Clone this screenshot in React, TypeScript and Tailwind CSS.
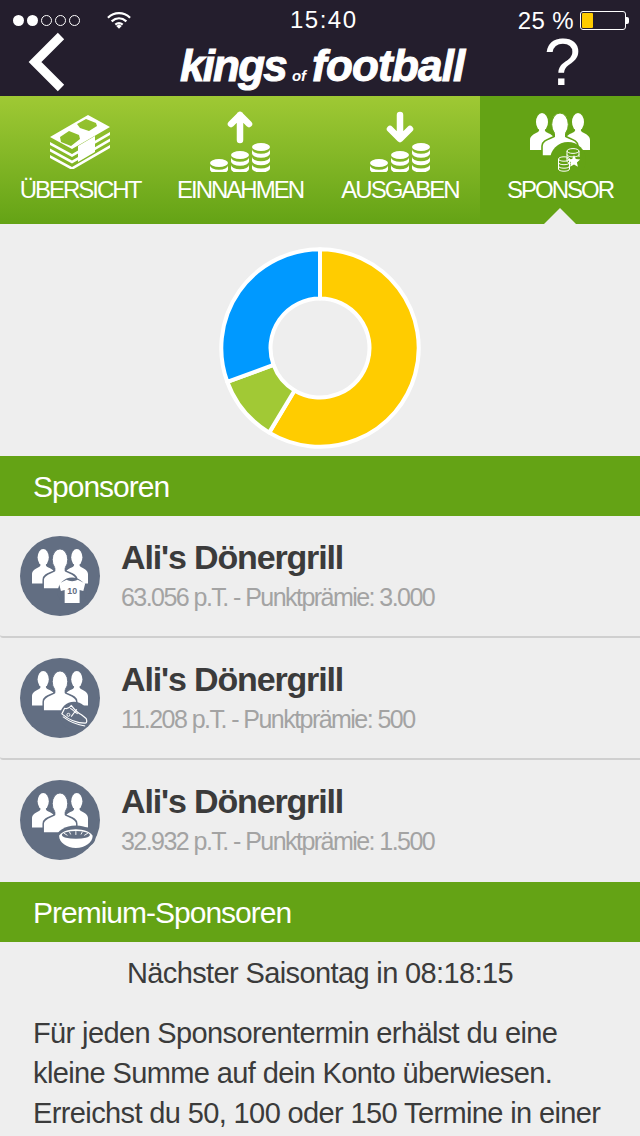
const sans = { fontFamily: '"Liberation Sans", Arial, sans-serif' };

// one coin of a stack, drawn as a crescent band
const Band = ({ cx, y }: { cx: number; y: number }) => (
  <path d={`M${cx - 9} ${y}v4a9 4.2 0 0 0 18 0v-4a9 4.2 0 0 1-18 0z`} fill="white" />
);

const Stack = ({ cx, top, count }: { cx: number; top: number; count: number }) => (
  <g>
    <ellipse cx={cx} cy={top} rx="9" ry="4" fill="white" />
    {Array.from({ length: count }).map((_, i) => (
      <Band key={i} cx={cx} y={top + 2.6 + i * 7.4} />
    ))}
  </g>
);

const Coins = () => (
  <g>
    <Stack cx={9} top={32} count={1} />
    <Stack cx={30} top={24} count={2} />
    <Stack cx={51} top={16} count={3} />
  </g>
);

const CoinsUp = () => (
  <svg width="60" height="62" viewBox="0 0 60 62" className="block">
    <path d="M30 30V5M21 14l9-9 9 9" stroke="white" strokeWidth="6.5" strokeLinecap="round" strokeLinejoin="round" fill="none" />
    <g transform="translate(0 21)"><Coins /></g>
  </svg>
);

const CoinsDown = () => (
  <svg width="60" height="62" viewBox="0 0 60 62" className="block">
    <path d="M30 5V28M20 19l10 10 10-10" stroke="white" strokeWidth="6.5" strokeLinecap="round" strokeLinejoin="round" fill="none" />
    <g transform="translate(0 21)"><Coins /></g>
  </svg>
);

const Money = () => (
  <svg width="60" height="54" viewBox="0 0 60 54" className="block mt-[5px]">
    <path
      fillRule="evenodd"
      fill="white"
      d="M0 22L38 0l22 12-38 22zM10 22l9-6 10 4 1 4-9 7-10-4zM27 9l9-5 10 4 1 3-8 5-9-3z"
    />
    {[0, 6.5, 13].map((o) => (
      <path key={o} d={`M0 ${27 + o}l22 12 38-22v3l-38 22-22-12z`} fill="white" />
    ))}
    <path d="M28 31l17-10v16l-17 10z" fill="white" />
  </svg>
);

// three people silhouette, shared by the sponsor tab and the list avatars
const People = ({ bg }: { bg: string }) => (
  <g>
    <ellipse cx="12" cy="9" rx="6" ry="9" fill="white" />
    <path d="M0 37V27c0-4 4-6 8-8 1.500-1 1.500-3 1-5h6c-.5 2-.5 4 1 5 4 2 8 3 8 8v10z" fill="white" />
    <ellipse cx="48" cy="9" rx="6" ry="9" fill="white" />
    <path d="M60 37V27c0-4-4-6-8-8-1.500-1-1.500-3-1-5h-6c.5 2 .5 4-1 5-4 2-8 3-8 8v10z" fill="white" />
    <path
      d="M12 43V33c0-6 8-7 13-10 1.500-1 1.500-3 0-5h10c-1.500 2-1.500 4 0 5 5 3 13 4 13 10v10z"
      fill="white"
      stroke={bg}
      strokeWidth="1.6"
    />
    <ellipse cx="30" cy="11.500" rx="8.300" ry="11.500" fill="white" stroke={bg} strokeWidth="1" />
    <path d="M25 17h10v8H25z" fill="white" />
  </g>
);

const SponsorIcon = () => (
  <svg width="60" height="60" viewBox="0 0 60 60" className="block mt-[3px]">
    <People bg="#64a315" />
    <circle cx="38" cy="47" r="18" fill="#64a315" />
    <g fill="none" stroke="white" strokeWidth="1">
      <ellipse cx="43" cy="38" rx="6" ry="2.4" />
      <path d="M37 38v10c0 1.5 3 2.4 6 2.4M37 41.5c0 1.5 3 2.4 6 2.4s6-.9 6-2.4M37 45c0 1.5 3 2.4 6 2.4M49 38v6" />
      <ellipse cx="34" cy="46" rx="5.5" ry="2.2" />
      <path d="M28.5 46v10c0 1.4 2.5 2.2 5.5 2.2s5.500-.8 5.500-2.200v-10M28.500 49.500c0 1.400 2.500 2.200 5.500 2.200s5.500-.8 5.500-2.200M28.500 53c0 1.400 2.500 2.200 5.500 2.200s5.500-.8 5.500-2.200" />
    </g>
    <path d="M44 42l1.800 4 4.400.4-3.300 3 1 4.300-3.900-2.300-3.900 2.300 1-4.300-3.300-3 4.400-.4z" fill="white" />
  </svg>
);

const Shirt = () => (
  <g>
    <circle cx="43" cy="46" r="15.500" fill="#626e82" />
    <path d="M37 33c3 2 9 2 12 0l8 4-2 8-4-1v14H35V44l-4 1-2-8z" fill="white" />
    <text x="43" y="48" textAnchor="middle" fontSize="9.500" fontWeight="700" fill="#626e82" fontFamily="Liberation Sans">10</text>
  </g>
);

const Shoe = () => (
  <g>
    <circle cx="45" cy="48" r="15" fill="#626e82" />
    <path
      d="M32 46l3-6c3 1 5 0 7-3 3 4 7 8 11 10l5 4c1 2 1 5-1 5-8 0-18-4-25-10z"
      fill="none"
      stroke="white"
      strokeWidth="1.300"
      strokeLinejoin="round"
    />
    <path d="M33 49c8 6 16 9 24 10M41 40l3 2M43.500 42l3 2M46 44l3 2M48 41l-6 8" fill="none" stroke="white" strokeWidth="1.100" />
    <circle cx="39" cy="47" r="1.600" fill="none" stroke="white" />
  </g>
);

const Stadium = () => (
  <g>
    <ellipse cx="47" cy="48" rx="21" ry="13" fill="#626e82" />
    <path d="M29 46c2-4 10-7 18-7s16 3 18 7c0 7-8 13-18 13s-18-6-18-13z" fill="white" />
    <ellipse cx="47" cy="45" rx="15" ry="4.200" fill="#626e82" />
    <path d="M34 43l4 2.500M47 41v4M60 43l-4 2.500M40 41.500l1.500 3M54 41.500l-1.500 3" stroke="white" strokeWidth="1" />
  </g>
);

const Avatar = ({ children }: { children: React.ReactNode }) => (
  <div className="w-20 h-20 rounded-full bg-[#626e82] flex items-center justify-center shrink-0">
    <svg width="56" height="60" viewBox="0 -3 60 64" className="block overflow-visible">
      <People bg="#626e82" />
      {children}
    </svg>
  </div>
);

const Tab = ({ label, active, children }: { label: string; active?: boolean; children: React.ReactNode }) => (
  <div className={`relative w-40 flex flex-col items-center ${active ? 'bg-[#64a315]' : ''}`}>
    <div className="h-[66px] mt-[14px] flex items-start justify-center">{children}</div>
    <span className="text-white text-[24px] leading-[28px] tracking-[-2px]" style={sans}>{label}</span>
    {active && (
      <div className="absolute bottom-0 left-1/2 -translate-x-1/2 w-0 h-0 border-l-[16px] border-r-[16px] border-b-[16px] border-l-transparent border-r-transparent border-b-[#eeeeee]" />
    )}
  </div>
);

const Row = ({ sub, icon, last }: { sub: string; icon: React.ReactNode; last?: boolean }) => (
  <div className={`h-[122px] flex items-start gap-[21px] pl-5 pt-5 ${last ? '' : 'border-b-2 border-[#cfcfcf] rounded-bl-[3px]'}`}>
    <Avatar>{icon}</Avatar>
    <div className="flex flex-col -mt-[1px]">
      <span className="text-[#3b3b3b] font-bold text-[34px] leading-[44px] tracking-[-1.15px]">Ali's Dönergrill</span>
      <span className="text-[#a3a3a3] text-[25px] leading-[32px] mt-[2px] tracking-[-1.55px]">{sub}</span>
    </div>
  </div>
);

const SectionHead = ({ title }: { title: string }) => (
  <div className="h-[60px] bg-[#64a315] flex items-center pl-[33px] text-white text-[30px] tracking-[-1px]">{title}</div>
);

// donut segment from angle a to b, degrees clockwise from the top
const polar = (r: number, deg: number) => {
  const t = (deg * Math.PI) / 180;
  return `${(102 + r * Math.sin(t)).toFixed(2)} ${(102 - r * Math.cos(t)).toFixed(2)}`;
};

const segment = (a: number, b: number) => {
  const large = b - a > 180 ? 1 : 0;
  return `M${polar(98.7, a)}A98.7 98.7 0 ${large} 1 ${polar(98.7, b)}L${polar(49.5, b)}A49.5 49.5 0 ${large} 0 ${polar(49.5, a)}Z`;
};

const Donut = () => (
  <svg width="204" height="204" viewBox="0 0 204 204" className="block">
    <path d={segment(0, 211)} fill="#ffcc00" stroke="white" strokeWidth="4" strokeLinejoin="round" />
    <path d={segment(211, 250)} fill="#a1c935" stroke="white" strokeWidth="4" strokeLinejoin="round" />
    <path d={segment(250, 360)} fill="#0099ff" stroke="white" strokeWidth="4" strokeLinejoin="round" />
  </svg>
);

export default function App() {
  return (
    <div className="w-[640px] h-[1136px] overflow-hidden bg-[#eeeeee]" style={sans}>
      <div className="h-24 bg-[#241e2d] flex flex-col">
        <div className="h-10 relative flex items-center justify-between pl-[13px] pr-[11px] pt-[1px]">
          <div className="flex items-center gap-[3px]">
            <span className="w-[11px] h-[11px] rounded-full bg-white" />
            <span className="w-[11px] h-[11px] rounded-full bg-white" />
            <span className="w-[11px] h-[11px] rounded-full border border-white" />
            <span className="w-[11px] h-[11px] rounded-full border border-white" />
            <span className="w-[11px] h-[11px] rounded-full border border-white" />
            <svg width="24" height="19" viewBox="0 0 26 20" className="ml-[24px] -mt-[1px]">
              <path d="M1 7c7-6.500 17-6.500 24 0M5 11c5-4.500 11-4.500 16 0M9 14.500c2.500-2 5.500-2 8 0" fill="none" stroke="white" strokeWidth="2.400" />
              <path d="M10 16l3-2 3 2-3 3z" fill="white" />
            </svg>
          </div>
          <span className="absolute left-[290px] top-[5px] text-white text-[24px] leading-[30px] tracking-[1.5px]">15:40</span>
          <div className="flex items-center gap-[6px]">
            <span className="text-white text-[24px] leading-[28px] tracking-[0.4px]">25 %</span>
            <div className="flex items-center">
              <div className="w-[46px] h-[19px] rounded-[3px] border border-white p-[1px]">
                <div className="w-[11px] h-full bg-[#ffcc00] rounded-[1px]" />
              </div>
              <div className="w-[3px] h-[7px] bg-white rounded-r-[2px]" />
            </div>
          </div>
        </div>
        <div className="flex-1 relative flex items-start">
          <svg width="38" height="60" viewBox="0 0 38 60" className="absolute left-[28px] top-[-8px]">
            <path d="M33 4L7 30l26 26" fill="none" stroke="white" strokeWidth="9" />
          </svg>
          <div className="absolute left-[180px] top-[2px] text-white italic font-bold whitespace-nowrap flex items-baseline [-webkit-text-stroke:1px_white]">
            <span className="text-[44px] leading-[48px] tracking-[-1.8px]">kings</span>
            <span className="text-[15px] mx-[6px] [-webkit-text-stroke:0px_white]">of</span>
            <span className="text-[44px] leading-[48px] tracking-[-0.8px]">football</span>
          </div>
          <span className="absolute left-[544px] top-[-3px] text-white text-[66px] leading-[50px]">?</span>
        </div>
      </div>

      <div className="h-32 flex bg-gradient-to-b from-[#9fc934] to-[#64a315]">
        <Tab label="ÜBERSICHT"><Money /></Tab>
        <Tab label="EINNAHMEN"><CoinsUp /></Tab>
        <Tab label="AUSGABEN"><CoinsDown /></Tab>
        <Tab label="SPONSOR" active><SponsorIcon /></Tab>
      </div>

      <div className="h-[232px] pt-4 flex items-center justify-center">
        <Donut />
      </div>

      <SectionHead title="Sponsoren" />
      <Row sub="63.056 p.T. - Punktprämie: 3.000" icon={<Shirt />} />
      <Row sub="11.208 p.T. - Punktprämie: 500" icon={<Shoe />} />
      <Row sub="32.932 p.T. - Punktprämie: 1.500" icon={<Stadium />} last />
      <SectionHead title="Premium-Sponsoren" />

      <div className="text-[#3b3b3b] text-[29px] tracking-[-0.62px]">
        <p className="text-center leading-[36px] mt-[13px]">Nächster Saisontag in 08:18:15</p>
        <div className="mt-[22px] pl-[33px] leading-[40px] whitespace-nowrap">
          <p>Für jeden Sponsorentermin erhälst du eine</p>
          <p>kleine Summe auf dein Konto überwiesen.</p>
          <p>Erreichst du 50, 100 oder 150 Termine in einer</p>
        </div>
      </div>
    </div>
  );
}
